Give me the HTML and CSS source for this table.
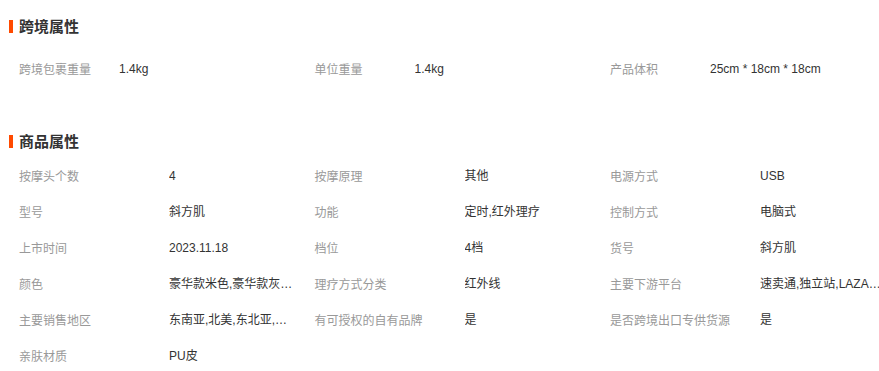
FILE: index.html
```html
<!DOCTYPE html>
<html lang="zh-CN">
<head>
<meta charset="utf-8">
<title>属性</title>
<link rel="stylesheet" href="styles.css">
</head>
<body>
<div class="page">
  <section class="block block-cross">
    <h2 class="block-title">跨境属性</h2>
    <div class="grid cross">
      <div class="cell"><span class="label">跨境包裹重量</span><span class="value">1.4kg</span></div>
      <div class="cell"><span class="label">单位重量</span><span class="value">1.4kg</span></div>
      <div class="cell"><span class="label">产品体积</span><span class="value">25cm * 18cm * 18cm</span></div>
    </div>
  </section>
  <section class="block block-goods">
    <h2 class="block-title">商品属性</h2>
    <div class="grid goods">
      <div class="cell"><span class="label">按摩头个数</span><span class="value">4</span></div>
      <div class="cell"><span class="label">按摩原理</span><span class="value">其他</span></div>
      <div class="cell"><span class="label">电源方式</span><span class="value">USB</span></div>
      <div class="cell"><span class="label">型号</span><span class="value">斜方肌</span></div>
      <div class="cell"><span class="label">功能</span><span class="value">定时,红外理疗</span></div>
      <div class="cell"><span class="label">控制方式</span><span class="value">电脑式</span></div>
      <div class="cell"><span class="label">上市时间</span><span class="value">2023.11.18</span></div>
      <div class="cell"><span class="label">档位</span><span class="value">4档</span></div>
      <div class="cell"><span class="label">货号</span><span class="value">斜方肌</span></div>
      <div class="cell"><span class="label">颜色</span><span class="value">豪华款米色,豪华款灰色,标准款米色,标准款灰色</span></div>
      <div class="cell"><span class="label">理疗方式分类</span><span class="value">红外线</span></div>
      <div class="cell"><span class="label">主要下游平台</span><span class="value">速卖通,独立站,LAZADA,ebay,亚马逊</span></div>
      <div class="cell"><span class="label">主要销售地区</span><span class="value">东南亚,北美,东北亚,欧洲</span></div>
      <div class="cell"><span class="label">有可授权的自有品牌</span><span class="value">是</span></div>
      <div class="cell"><span class="label">是否跨境出口专供货源</span><span class="value">是</span></div>
      <div class="cell"><span class="label">亲肤材质</span><span class="value">PU皮</span></div>
    </div>
  </section>
</div>
</body>
</html>
```

FILE: styles.css
```css
html, body {
  margin: 0;
  padding: 0;
  background: #fff;
  overflow: hidden;
}

body {
  font-family: "Liberation Sans", "Noto Sans CJK SC", sans-serif;
  font-size: 12px;
  color: #333;
}

.page {
  width: 887px;
  padding-top: 16px;
}

.block-title {
  margin: 0;
  padding-left: 19px;
  position: relative;
  height: 20px;
  line-height: 20px;
  font-size: 15px;
  font-weight: bold;
  color: #333;
  font-family: "Noto Sans CJK SC", sans-serif;
}

.block-title::before {
  content: "";
  position: absolute;
  left: 9px;
  top: 4px;
  width: 4px;
  height: 13px;
  background: #ff4a00;
}

.grid {
  display: grid;
  grid-template-columns: repeat(3, 295.5px);
}

.cross {
  margin-top: 15px;
}

.block-goods {
  margin-top: 44px;
}

.goods {
  margin-top: 7px;
}

.cell {
  display: flex;
  height: 36px;
  line-height: 36px;
  padding-left: 19px;
  min-width: 0;
}

.label {
  flex: none;
  color: #999;
  font-family: "Noto Sans CJK SC", sans-serif;
}

.cross .label {
  width: 100px;
}

.goods .label {
  width: 150px;
}

.value {
  flex: 1;
  min-width: 0;
  white-space: nowrap;
  overflow: hidden;
  text-overflow: ellipsis;
  color: #333;
}
```
